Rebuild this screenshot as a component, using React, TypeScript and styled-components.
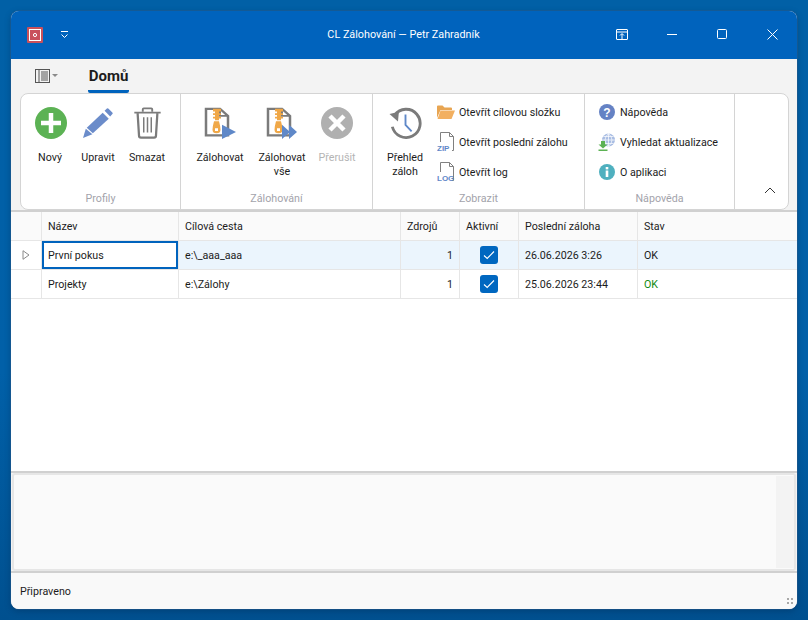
import React from "react";
import styled, { createGlobalStyle } from "styled-components";

const GlobalStyle = createGlobalStyle`
  html, body { margin: 0; height: 100%; }
  body {
    background: linear-gradient(180deg, #0160a6 0%, #0160a8 60%, #00508f 100%);
    font-family: Roboto, "Noto Sans", sans-serif;
    font-size: 10.7px;
    color: #1c1c1c;
  }
`;

const Desktop = styled.div`
  width: 808px;
  height: 620px;
  padding: 11px;
  box-sizing: border-box;
`;

const Window = styled.div`
  width: 786px;
  height: 598px;
  display: flex;
  flex-direction: column;
  border-radius: 8px;
  overflow: hidden;
  background: #f3f3f3;
  box-shadow: 0 0 0 1px rgba(40, 90, 140, 0.5), 0 2px 6px rgba(0, 40, 80, 0.4);
`;

const TitleBar = styled.div`
  height: 48px;
  flex: none;
  display: flex;
  align-items: center;
  background: #0063bd;
  color: #fff;
  padding-left: 16px;
`;

const QuickButton = styled.div`
  margin-left: 13px;
  width: 18px;
  display: flex;
  justify-content: center;
`;

const Title = styled.div`
  flex: 1;
  text-align: center;
  font-size: 10.8px;
  padding-left: 136px;
  margin-top: -2px;
`;

const Caption = styled.div`
  display: flex;
  align-items: center;
  height: 100%;
  margin-top: -2px;
`;

const CaptionButton = styled.div`
  width: 50px;
  display: flex;
  justify-content: center;
`;

const TabStrip = styled.div`
  height: 34px;
  flex: none;
  display: flex;
  align-items: flex-start;
  padding-left: 24px;
`;

const AppMenu = styled.div`
  margin-top: 10px;
  display: flex;
  align-items: center;
  gap: 2px;
  width: 53px;
`;

const Tab = styled.div`
  height: 34px;
  box-sizing: border-box;
  padding-top: 8px;
  border-bottom: 3px solid #0063bd;
  border-radius: 0 0 2px 2px;
  font-weight: 700;
  font-size: 15px;
  width: 41px;
  white-space: nowrap;
  display: flex;
  justify-content: center;
`;

const RibbonWrap = styled.div`
  flex: none;
  padding: 0 8px 0 9px;
  height: 117px;
`;

const Ribbon = styled.div`
  height: 117px;
  box-sizing: border-box;
  background: #fff;
  border: 1px solid #d4d4d4;
  border-radius: 8px;
  display: flex;
  overflow: hidden;
`;

const Group = styled.div<{ $width: number }>`
  width: ${(p) => p.$width}px;
  flex: none;
  box-sizing: border-box;
  border-right: 1px solid #d4d4d4;
  display: flex;
  flex-direction: column;
`;

const GroupBody = styled.div<{ $pad: number }>`
  height: 93px;
  display: flex;
  padding-left: ${(p) => p.$pad}px;
`;

const GroupLabel = styled.div`
  height: 22px;
  text-align: center;
  color: #a3a3ab;
  line-height: 24px;
`;

const LargeButton = styled.div<{ $width: number; $disabled?: boolean }>`
  width: ${(p) => p.$width}px;
  flex: none;
  display: flex;
  flex-direction: column;
  align-items: center;
  padding-top: 13px;
  text-align: center;
  line-height: 14px;
  color: ${(p) => (p.$disabled ? "#b4b4b4" : "#1c1c1c")};
`;

const LargeIcon = styled.div`
  height: 32px;
  display: flex;
  align-items: center;
  justify-content: center;
`;

const LargeLabel = styled.div`
  margin-top: 12px;
`;

const SmallList = styled.div`
  display: flex;
  flex-direction: column;
  padding-top: 3px;
  margin-left: 8px;
`;

const SmallButton = styled.div`
  height: 30px;
  display: flex;
  align-items: center;
  gap: 4px;
  white-space: nowrap;
`;

const SmallIcon = styled.div`
  width: 18px;
  height: 22px;
  display: flex;
  align-items: center;
  justify-content: center;
`;

const Collapse = styled.div`
  flex: 1;
  display: flex;
  align-items: flex-end;
  justify-content: center;
  padding: 0 0 15px 17px;
`;

const Main = styled.div`
  flex: 1;
  border-top: 2px solid #d0d0d0;
  border-bottom: 2px solid #d0d0d0;
  background: #fff;
  min-height: 0;
`;

const GridRow = styled.div<{ $header?: boolean; $active?: boolean }>`
  display: grid;
  grid-template-columns: 31px 137px 222px 59px 59px 119px 1fr;
  height: 29px;
  box-sizing: border-box;
  border-bottom: 1px solid #e6e6e6;
  background: ${(p) => (p.$header ? "#fafafa" : p.$active ? "#ebf5fd" : "#fff")};
`;

const Cell = styled.div<{ $right?: boolean; $focus?: boolean; $color?: string; $center?: boolean }>`
  box-sizing: border-box;
  display: flex;
  align-items: center;
  justify-content: ${(p) => (p.$right ? "flex-end" : p.$center ? "center" : "flex-start")};
  padding: 0 6px;
  border-right: 1px solid #e6e6e6;
  white-space: nowrap;
  color: ${(p) => p.$color || "#1c1c1c"};
  ${(p) =>
    p.$focus &&
    `
    background: #fff;
    box-shadow: inset 0 0 0 2px #0063bd;
  `}
`;

const LastCell = styled(Cell)`
  border-right: none;
`;

const RowHead = styled(Cell)`
  justify-content: center;
  padding: 0;
  background: #fff;
`;

const CheckBox = styled.div`
  width: 18px;
  height: 18px;
  border-radius: 3px;
  background: #0067c0;
  display: flex;
  align-items: center;
  justify-content: center;
`;

const DetailArea = styled.div`
  height: 98px;
  flex: none;
  box-sizing: border-box;
  margin: 0 1px;
  border: 2px solid #e6e6e6;
  border-radius: 3px;
  background: #fafafa;
  display: flex;
  justify-content: flex-end;
  padding: 1px 0;
`;

const DetailScroll = styled.div`
  width: 18px;
  background: #f3f3f3;
`;

const StatusBar = styled.div`
  height: 38px;
  flex: none;
  border-top: 2px solid #d0d0d0;
  background: #f9f9f9;
  display: flex;
  align-items: center;
  justify-content: space-between;
  padding: 0 4px 0 9px;
  box-sizing: border-box;
`;

const Grip = styled.div`
  align-self: flex-end;
  margin-bottom: 5px;
  display: grid;
  grid-template-columns: 2px 2px;
  gap: 2px;
  span {
    width: 2px;
    height: 2px;
    background: #a8a8a8;
  }
`;

const AppIcon = () => (
  <svg width="16" height="16" viewBox="0 0 16 16">
    <rect x="0" y="0" width="16" height="16" rx="1" fill="#c9505b" />
    <rect x="2.5" y="2.5" width="11" height="11" fill="none" stroke="#fff" strokeWidth="1" />
    <circle cx="8" cy="8" r="1.6" fill="none" stroke="#fff" strokeWidth="1" />
  </svg>
);

const QuickIcon = () => (
  <svg width="10" height="10" viewBox="0 0 10 10" fill="none" stroke="#fff" strokeWidth="1">
    <path d="M1 1.5h7M1.5 4.500L4.500 7.500L7.500 4.500" />
  </svg>
);

const PlusIcon = () => (
  <svg width="34" height="32" viewBox="0 0 34 32">
    <circle cx="18" cy="16" r="16" fill="#5cb254" />
    <path d="M18 6v20M8 16h20" stroke="#fff" strokeWidth="4.500" />
  </svg>
);

const PencilIcon = () => (
  <svg width="30" height="30" viewBox="0 0 32 32">
    <path d="M0 32l3-10 7 6z" fill="#6b8cca" />
    <path d="M4 21L21 5l6.500 6.500L10.500 27z" fill="#6b8cca" />
    <path d="M23 3l2.500-2.500q1-.5 1.800.2l4 4q.8 1 0 1.800L29 9z" fill="#6b8cca" />
  </svg>
);

const TrashIcon = () => (
  <svg width="29" height="32" viewBox="0 0 30 34" fill="none" stroke="#7b7b7b">
    <path d="M1 6h28" strokeWidth="2" />
    <path d="M10 5V2.500q0-1 1-1h8q1 0 1 1V5" strokeWidth="2" />
    <path d="M4.500 6.500L6 30.500q0 2 2 2h14q2 0 2-2l1.500-24" strokeWidth="2.400" />
    <path d="M11 11v16M15 11v16M19 11v16" strokeWidth="1.600" />
  </svg>
);

const ZipBase = () => (
  <>
    <path d="M2 2V32H24V10L16 2Z" fill="#fff" stroke="#7b7b7b" strokeWidth="2.500" />
    <path d="M16 2V10H24" fill="none" stroke="#7b7b7b" strokeWidth="2" />
    <path d="M9 2h8v3h-2v2h2v2h-2v2h2v2h-2v2h-4v-2h-2v-2h2v-2h-2v-2h2V5H9Z" fill="#f0a848" />
    <path d="M10 16h5q1.500 6 1.500 9.500a4 4 0 0 1-8 0Q8.500 22 10 16Zm1 8v3h3v-3Z" fill="#f0a848" fillRule="evenodd" />
  </>
);

const BackupIcon = () => (
  <svg width="32" height="32" viewBox="0 0 32 36" preserveAspectRatio="none">
    <ZipBase />
    <path d="M18 20L32 28L18 36Z" fill="#5f88c8" />
  </svg>
);

const BackupAllIcon = () => (
  <svg width="32" height="32" viewBox="0 0 32 36" preserveAspectRatio="none">
    <ZipBase />
    <path d="M16 20L24 28L16 36ZM23 20L31 28L23 36Z" fill="#5f88c8" />
  </svg>
);

const StopIcon = () => (
  <svg width="32" height="32" viewBox="0 0 32 32">
    <circle cx="16" cy="16" r="16" fill="#b0b0b0" />
    <path d="M9 9L23 23M23 9L9 23" stroke="#fff" strokeWidth="4.500" />
  </svg>
);

const HistoryIcon = () => (
  <svg width="33" height="32" viewBox="0 0 34 34" fill="none">
    <path d="M5.500 8.500A15 15 0 1 1 3 21" stroke="#7b7b7b" strokeWidth="3" />
    <path d="M0 7.500L9 15.500L10 5Z" fill="#7b7b7b" />
    <path d="M17 8V19L23.500 26" stroke="#5f88c8" strokeWidth="2" />
  </svg>
);

const FolderIcon = () => (
  <svg width="18" height="14" viewBox="0 0 18 14">
    <path d="M0 1.500q0-1 1-1h4.500l2 2H14q1 0 1 1V5H3.500L0 13Z" fill="#e8a552" />
    <path d="M3.500 5.500H18L14.500 14H0.500Z" fill="#f2b061" />
  </svg>
);

const FileTagIcon = ({ tag }: { tag: string }) => (
  <svg width="18" height="20" viewBox="0 0 18 20">
    <path d="M3.500 10V.5H12.500L16.500 4.500V18.500H15" fill="none" stroke="#808080" />
    <path d="M12.500 .5V4.500H16.500" fill="none" stroke="#808080" />
    <text x="0" y="18.500" fontSize="8" fontWeight="700" fontFamily="Liberation Sans" fill="#5f88c8">
      {tag}
    </text>
  </svg>
);

const HelpIcon = () => (
  <svg width="16" height="16" viewBox="0 0 16 16">
    <circle cx="8" cy="8" r="8" fill="#6582c4" />
    <text x="8" y="12.500" textAnchor="middle" fontSize="12" fontWeight="700" fontFamily="Liberation Sans" fill="#fff">
      ?
    </text>
  </svg>
);

const UpdateIcon = () => (
  <svg width="18" height="18" viewBox="0 0 18 18" fill="none">
    <circle cx="10.500" cy="7" r="6.500" fill="#a9bde3" />
    <path d="M10.500 .5v13M4 7h13M5.500 3.500h10M5.500 10.500h10M10.500 .5q-7 6.500 0 13M10.500 .5q7 6.500 0 13" stroke="#fff" strokeWidth=".7" />
    <path d="M3 8h4v3.500h2.500L5 15.500.5 11.500H3Z" fill="#5cb254" />
    <path d="M.5 16.500h9v1.500h-9Z" fill="#5cb254" />
  </svg>
);

const InfoIcon = () => (
  <svg width="16" height="16" viewBox="0 0 16 16">
    <circle cx="8" cy="8" r="8" fill="#4fb0bf" />
    <rect x="6.700" y="6.500" width="2.600" height="6.500" fill="#fff" />
    <rect x="6.700" y="3" width="2.600" height="2.400" fill="#fff" />
  </svg>
);

const Check = () => (
  <svg width="12" height="10" viewBox="0 0 12 10" fill="none" stroke="#fff" strokeWidth="1.100">
    <path d="M1 5.500L4.200 8.500L11 1.500" />
  </svg>
);

const rows = [
  { name: "První pokus", path: "e:\\_aaa_aaa", sources: 1, last: "26.06.2026 3:26", status: "OK", active: true },
  { name: "Projekty", path: "e:\\Zálohy", sources: 1, last: "25.06.2026 23:44", status: "OK", active: false },
];

export default function App() {
  return (
    <Desktop>
      <GlobalStyle />
      <Window>
        <TitleBar>
          <AppIcon />
          <QuickButton>
            <QuickIcon />
          </QuickButton>
          <Title>CL Zálohování — Petr Zahradník</Title>
          <Caption>
            <CaptionButton>
              <svg width="12" height="11" viewBox="0 0 12 11" fill="none" stroke="#fff">
                <path d="M1 .5h10q.5 0 .5.5v9q0 .5-.5.5H1q-.5 0-.5-.5V1q0-.5.5-.5ZM.5 3h11M6 10V5M4 6.500L6 4.500L8 6.500" />
              </svg>
            </CaptionButton>
            <CaptionButton>
              <svg width="10" height="1" viewBox="0 0 10 1">
                <rect width="10" height="1" fill="#fff" />
              </svg>
            </CaptionButton>
            <CaptionButton>
              <svg width="10" height="10" viewBox="0 0 10 10" fill="none" stroke="#fff">
                <rect x=".5" y=".5" width="9" height="9" rx="1" />
              </svg>
            </CaptionButton>
            <CaptionButton>
              <svg width="11" height="11" viewBox="0 0 11 11" fill="none" stroke="#fff">
                <path d="M.5 .5L10.500 10.500M10.500 .5L.5 10.500" />
              </svg>
            </CaptionButton>
          </Caption>
        </TitleBar>

        <TabStrip>
          <AppMenu>
            <svg width="15" height="14" viewBox="0 0 15 14" fill="none" stroke="#555">
              <rect x=".5" y=".5" width="14" height="13" />
              <path d="M4 .5v13M6 3h7M6 5h7M6 7h7M6 9h7M6 11h7" />
            </svg>
            <svg width="6" height="4" viewBox="0 0 6 4">
              <path d="M0 0h6L3 3Z" fill="#8a8a8a" />
            </svg>
          </AppMenu>
          <Tab>Domů</Tab>
        </TabStrip>

        <RibbonWrap>
          <Ribbon>
            <Group $width={160}>
              <GroupBody $pad={5}>
                <LargeButton $width={48}>
                  <LargeIcon>
                    <PlusIcon />
                  </LargeIcon>
                  <LargeLabel>Nový</LargeLabel>
                </LargeButton>
                <LargeButton $width={48}>
                  <LargeIcon>
                    <PencilIcon />
                  </LargeIcon>
                  <LargeLabel>Upravit</LargeLabel>
                </LargeButton>
                <LargeButton $width={50}>
                  <LargeIcon>
                    <TrashIcon />
                  </LargeIcon>
                  <LargeLabel>Smazat</LargeLabel>
                </LargeButton>
              </GroupBody>
              <GroupLabel>Profily</GroupLabel>
            </Group>
            <Group $width={192}>
              <GroupBody $pad={8}>
                <LargeButton $width={62}>
                  <LargeIcon>
                    <BackupIcon />
                  </LargeIcon>
                  <LargeLabel>Zálohovat</LargeLabel>
                </LargeButton>
                <LargeButton $width={62}>
                  <LargeIcon>
                    <BackupAllIcon />
                  </LargeIcon>
                  <LargeLabel>
                    Zálohovat
                    <br />
                    vše
                  </LargeLabel>
                </LargeButton>
                <LargeButton $width={48} $disabled>
                  <LargeIcon>
                    <StopIcon />
                  </LargeIcon>
                  <LargeLabel>Přerušit</LargeLabel>
                </LargeButton>
              </GroupBody>
              <GroupLabel>Zálohování</GroupLabel>
            </Group>
            <Group $width={212}>
              <GroupBody $pad={8}>
                <LargeButton $width={48}>
                  <LargeIcon>
                    <HistoryIcon />
                  </LargeIcon>
                  <LargeLabel>
                    Přehled
                    <br />
                    záloh
                  </LargeLabel>
                </LargeButton>
                <SmallList>
                  <SmallButton>
                    <SmallIcon>
                      <FolderIcon />
                    </SmallIcon>
                    Otevřít cílovou složku
                  </SmallButton>
                  <SmallButton>
                    <SmallIcon>
                      <FileTagIcon tag="ZIP" />
                    </SmallIcon>
                    Otevřít poslední zálohu
                  </SmallButton>
                  <SmallButton>
                    <SmallIcon>
                      <FileTagIcon tag="LOG" />
                    </SmallIcon>
                    Otevřít log
                  </SmallButton>
                </SmallList>
              </GroupBody>
              <GroupLabel>Zobrazit</GroupLabel>
            </Group>
            <Group $width={150}>
              <GroupBody $pad={5}>
                <SmallList>
                  <SmallButton>
                    <SmallIcon>
                      <HelpIcon />
                    </SmallIcon>
                    Nápověda
                  </SmallButton>
                  <SmallButton>
                    <SmallIcon>
                      <UpdateIcon />
                    </SmallIcon>
                    Vyhledat aktualizace
                  </SmallButton>
                  <SmallButton>
                    <SmallIcon>
                      <InfoIcon />
                    </SmallIcon>
                    O aplikaci
                  </SmallButton>
                </SmallList>
              </GroupBody>
              <GroupLabel>Nápověda</GroupLabel>
            </Group>
            <Collapse>
              <svg width="12" height="7" viewBox="0 0 12 7" fill="none" stroke="#333">
                <path d="M1 6L6 1L11 6" />
              </svg>
            </Collapse>
          </Ribbon>
        </RibbonWrap>

        <Main>
          <GridRow $header>
            <Cell />
            <Cell>Název</Cell>
            <Cell>Cílová cesta</Cell>
            <Cell>Zdrojů</Cell>
            <Cell>Aktivní</Cell>
            <Cell>Poslední záloha</Cell>
            <LastCell>Stav</LastCell>
          </GridRow>
          {rows.map((r) => (
            <GridRow key={r.name} $active={r.active}>
              <RowHead>
                {r.active && (
                  <svg width="8" height="10" viewBox="0 0 8 10" fill="none" stroke="#8a8a8a">
                    <path d="M1 .7L7 5L1 9.300Z" />
                  </svg>
                )}
              </RowHead>
              <Cell $focus={r.active}>{r.name}</Cell>
              <Cell>{r.path}</Cell>
              <Cell $right>{r.sources}</Cell>
              <Cell $center>
                <CheckBox>
                  <Check />
                </CheckBox>
              </Cell>
              <Cell>{r.last}</Cell>
              <LastCell $color={r.active ? "#1c1c1c" : "#128a12"}>{r.status}</LastCell>
            </GridRow>
          ))}
        </Main>

        <DetailArea>
          <DetailScroll />
        </DetailArea>

        <StatusBar>
          Připraveno
          <Grip>
            <span />
            <span />
            <span />
            <span />
          </Grip>
        </StatusBar>
      </Window>
    </Desktop>
  );
}
